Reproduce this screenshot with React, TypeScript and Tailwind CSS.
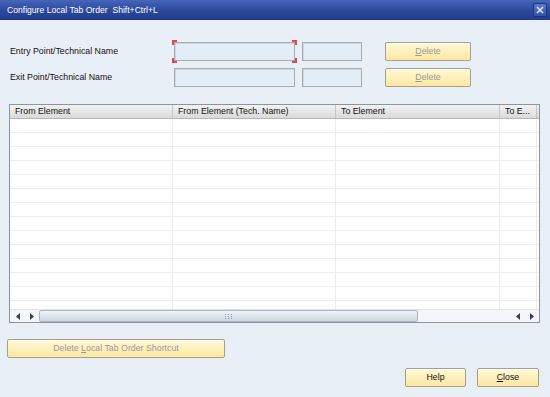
import React from "react";

const font = { fontFamily: '"Liberation Sans", Arial, sans-serif' };

function Ul({ c, rest }: { c: string; rest: string }) {
  return (
    <span>
      <span className="underline underline-offset-1">{c}</span>
      {rest}
    </span>
  );
}

function SapButton({
  children,
  disabled,
  className = "",
}: {
  children: React.ReactNode;
  disabled?: boolean;
  className?: string;
}) {
  return (
    <div
      className={`flex h-[19px] items-center justify-center rounded-[2px] border border-[#a8a18a] bg-gradient-to-b from-[#fff8d8] to-[#fde8a2] text-[8.8px] shadow-[inset_0_1px_0_#ffffff] ${
        disabled ? "text-[#9a9a92]" : "text-[#111]"
      } ${className}`}
    >
      {children}
    </div>
  );
}

function Field({ className = "" }: { className?: string }) {
  return (
    <div
      className={`h-[19px] border border-[#a7acb2] bg-[#e3edf7] shadow-[inset_1px_1px_0_#cfd6de] ${className}`}
    />
  );
}

function Corners() {
  const c = "absolute h-[5px] w-[5px] border-[#e0474a]";
  return (
    <>
      <span className={`${c} -left-[2px] -top-[2px] border-l-2 border-t-2`} />
      <span className={`${c} -right-[2px] -top-[2px] border-r-2 border-t-2`} />
      <span className={`${c} -left-[2px] -bottom-[2px] border-l-2 border-b-2`} />
      <span className={`${c} -right-[2px] -bottom-[2px] border-r-2 border-b-2`} />
    </>
  );
}

const columns = [
  { label: "From Element", w: "w-[163px]" },
  { label: "From Element (Tech. Name)", w: "w-[163px]" },
  { label: "To Element", w: "w-[164px]" },
  { label: "To E...", w: "w-[37px]" },
];

function Arrows() {
  return (
    <>
      <svg width="4" height="7" viewBox="0 0 4 7">
        <path d="M4 0L0 3.5L4 7Z" fill="#3a4250" />
      </svg>
      <svg width="4" height="7" viewBox="0 0 4 7">
        <path d="M0 0L4 3.5L0 7Z" fill="#3a4250" />
      </svg>
    </>
  );
}

export default function App() {
  const rows = Array.from({ length: 14 });
  return (
    <div
      style={font}
      className="flex h-[397px] w-[550px] flex-col overflow-hidden bg-[#e9eff6] text-[8.8px] text-[#111]"
    >
      {/* title bar */}
      <div className="flex h-[20px] shrink-0 items-center justify-between bg-gradient-to-b from-[#4566bb] via-[#2e4a9e] to-[#223a8a] pl-[7px] pr-[3px]">
        <span className="text-[8.6px] text-white">
          Configure Local Tab Order&nbsp; Shift+Ctrl+L
        </span>
        <div className="flex h-[14px] w-[14px] items-center justify-center rounded-[2px] border border-[#1e3378] bg-gradient-to-b from-[#5b7cc8] to-[#3552a3]">
          <svg width="8" height="8" viewBox="0 0 8 8">
            <path d="M1 1L7 7M7 1L1 7" stroke="#dce6f7" strokeWidth="1.6" />
          </svg>
        </div>
      </div>

      {/* fields */}
      <div className="flex flex-col gap-[7px] pl-[10px] pt-[22px]">
        <div className="flex items-center">
          <span className="w-[164px]">Entry Point/Technical Name</span>
          <div className="relative">
            <Field className="w-[121px]" />
            <Corners />
          </div>
          <Field className="ml-[7px] w-[60px]" />
          <SapButton disabled className="ml-[23px] w-[86px]">
            <Ul c="D" rest="elete" />
          </SapButton>
        </div>
        <div className="flex items-center">
          <span className="w-[164px]">Exit Point/Technical Name</span>
          <Field className="w-[121px]" />
          <Field className="ml-[7px] w-[60px]" />
          <SapButton disabled className="ml-[23px] w-[86px]">
            <Ul c="D" rest="elete" />
          </SapButton>
        </div>
      </div>

      {/* table */}
      <div className="ml-[9px] mt-[17px] flex h-[219px] w-[531px] flex-col border border-[#8e949b] bg-white">
        <div className="flex h-[14px] shrink-0 border-b border-[#b3b7bc] bg-gradient-to-b from-[#f2f2f2] to-[#dadada]">
          {columns.map((c) => (
            <div
              key={c.label}
              className={`${c.w} flex items-center border-r border-[#c3c6ca] pl-[5px] leading-none`}
            >
              {c.label}
            </div>
          ))}
        </div>
        <div className="flex-1 overflow-hidden">
          {rows.map((_, i) => (
            <div key={i} className="flex h-[14px] border-b border-[#eeeeee]">
              {columns.map((c) => (
                <div key={c.label} className={`${c.w} border-r border-[#ececec]`} />
              ))}
            </div>
          ))}
        </div>
        {/* horizontal scrollbar */}
        <div className="flex h-[13px] shrink-0 items-center border-t border-[#dde3ea] bg-[#f4f6f9]">
          <div className="flex w-[29px] items-center justify-around pl-[1px]">
            <Arrows />
          </div>
          <div className="flex h-[12px] w-[379px] items-center justify-center rounded-[2px] border border-[#aab6c5] bg-gradient-to-b from-[#f2f5f9] to-[#cdd7e3]">
            <svg width="7" height="5" viewBox="0 0 7 5">
              {[0, 3, 6].map((x) =>
                [0, 2, 4].map((y) => (
                  <rect key={`${x}-${y}`} x={x} y={y} width="1" height="1" fill="#8d99a8" />
                ))
              )}
            </svg>
          </div>
          <div className="flex-1" />
          <div className="flex w-[28px] items-center justify-around">
            <Arrows />
          </div>
        </div>
      </div>

      {/* bottom */}
      <SapButton disabled className="ml-[7px] mt-[16px] w-[218px]">
        <span>
          Delete <Ul c="L" rest="ocal Tab Order Shortcut" />
        </span>
      </SapButton>
      <div className="mt-[10px] flex justify-end gap-[11px] pr-[11px]">
        <SapButton className="w-[61px]">Help</SapButton>
        <SapButton className="w-[62px]">
          <Ul c="C" rest="lose" />
        </SapButton>
      </div>
    </div>
  );
}
